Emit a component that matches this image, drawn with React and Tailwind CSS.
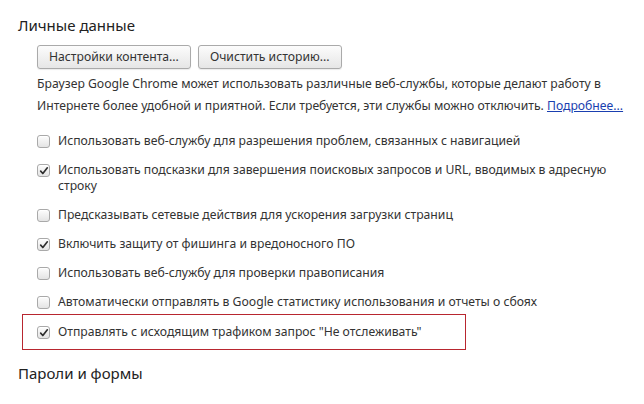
import { useState } from 'react'

const items = [
  { label: 'Использовать веб-службу для разрешения проблем, связанных с навигацией', checked: false },
  { label: 'Использовать подсказки для завершения поисковых запросов и URL, вводимых в адресную строку', checked: true },
  { label: 'Предсказывать сетевые действия для ускорения загрузки страниц', checked: false },
  { label: 'Включить защиту от фишинга и вредоносного ПО', checked: true },
  { label: 'Использовать веб-службу для проверки правописания', checked: false },
  { label: 'Автоматически отправлять в Google статистику использования и отчеты о сбоях', checked: false },
]

function Checkbox({ checked, onChange }) {
  return (
    <button
      type="button"
      onClick={onChange}
      className="mt-[2px] w-[13px] h-[13px] shrink-0 rounded-[3px] border border-[#a9a9a9] bg-gradient-to-b from-[#fdfdfd] to-[#e4e4e4] shadow-[inset_0_1px_0_#fff] flex items-center justify-center"
    >
      {checked && (
        <svg viewBox="0 0 12 12" className="w-[10px] h-[10px]">
          <path d="M2 6.2 L4.6 9 L10 2.2" fill="none" stroke="#2e2e2e" strokeWidth="2" strokeLinecap="round" strokeLinejoin="round" />
        </svg>
      )}
    </button>
  )
}

function Row({ label, checked, onToggle }) {
  return (
    <label className="flex items-start gap-[8px] leading-[16px]">
      <Checkbox checked={checked} onChange={onToggle} />
      <span className="max-w-[580px]">{label}</span>
    </label>
  )
}

export default function App() {
  const [state, setState] = useState(items.map(i => i.checked))
  const [dnt, setDnt] = useState(true)

  const toggle = idx => setState(s => s.map((v, i) => (i === idx ? !v : v)))

  return (
    <div className="w-[644px] h-[404px] bg-white overflow-hidden text-[#333] font-['Noto_Sans',sans-serif] text-[12.2px]">
      <div className="pt-[15px] pl-[18px]">
        <h2 className="text-[15px] text-[#222] leading-[20px]">Личные данные</h2>

        <div className="pl-[19px] mt-[10px] flex gap-[7px]">
          <button className="h-[24px] px-[11px] rounded-[3px] border border-[#aaa] bg-gradient-to-b from-[#fcfcfc] to-[#e6e6e6] text-[#333] shadow-[0_1px_1px_rgba(0,0,0,0.08)]">
            Настройки контента...
          </button>
          <button className="h-[24px] px-[11px] rounded-[3px] border border-[#aaa] bg-gradient-to-b from-[#fcfcfc] to-[#e6e6e6] text-[#333] shadow-[0_1px_1px_rgba(0,0,0,0.08)]">
            Очистить историю...
          </button>
        </div>

        <p className="pl-[19px] mt-[4px] leading-[22px] w-[624px]">
          Браузер Google Chrome может использовать различные веб-службы, которые делают работу в Интернете более удобной и приятной. Если требуется, эти службы можно отключить.{' '}
          <a href="#" className="text-[#1a3fb0] underline">Подробнее...</a>
        </p>

        <div className="pl-[19px] mt-[16px] flex flex-col gap-[13px]">
          {items.map((it, i) => (
            <Row key={i} label={it.label} checked={state[i]} onToggle={() => toggle(i)} />
          ))}
        </div>

        <div className="mt-[4px] ml-[4px] w-[444px] h-[36px] border border-[#b8262f] pl-[14px] flex items-center">
          <Row label={'Отправлять с исходящим трафиком запрос "Не отслеживать"'} checked={dnt} onToggle={() => setDnt(v => !v)} />
        </div>

        <h2 className="mt-[13px] text-[15px] text-[#222] leading-[20px]">Пароли и формы</h2>
      </div>
    </div>
  )
}
